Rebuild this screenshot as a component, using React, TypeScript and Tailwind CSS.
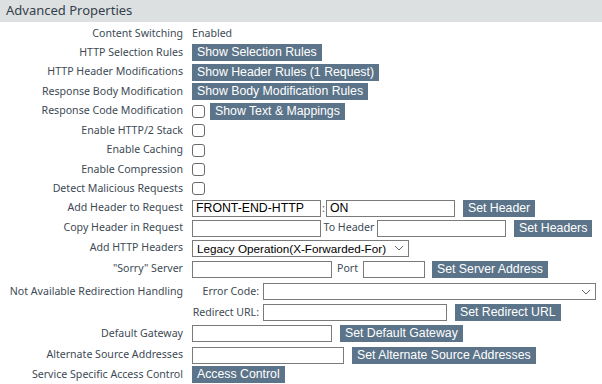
import React from 'react'

const label = "text-[10.6px] text-[#3d4a55] [font-family:'Noto_Sans',sans-serif] whitespace-nowrap"
const btn = "shrink-0 h-[17px] px-[5px] bg-[#5b7489] text-white text-[12.3px] leading-[17px] whitespace-nowrap [font-family:'Liberation_Sans',Arial,sans-serif]"
const input = "shrink-0 h-[17px] border border-[#7a7a7a] bg-white text-[12.3px] leading-[15px] px-[3px] text-black whitespace-nowrap overflow-hidden [font-family:'Liberation_Sans',Arial,sans-serif]"

function Checkbox() {
  return <div className="shrink-0 w-[13px] h-[13px] border border-[#6a6a6a] rounded-[3px] bg-white" />
}

function Chevron() {
  return (
    <svg width="10" height="6" viewBox="0 0 10 6" className="shrink-0">
      <path d="M1 1l4 4 4-4" fill="none" stroke="#666" strokeWidth="1" />
    </svg>
  )
}

function Row({ name, h, children }: { name: string; h: string; children?: React.ReactNode }) {
  return (
    <div className={`flex items-center ${h}`}>
      <div className={`w-[184px] shrink-0 text-right pr-[1px] ${label}`}>{name}</div>
      <div className="flex items-center pl-[8px]">{children}</div>
    </div>
  )
}

export default function App() {
  return (
    <div className="w-[602px] h-[384px] bg-white overflow-hidden">
      <div className="h-[22px] bg-[#dde0e1] flex items-center px-[6px]">
        <span className="text-[13px] text-[#33414c] [font-family:'Noto_Sans',sans-serif]">Advanced Properties</span>
      </div>
      <div className="mt-[2px]">
        <Row name="Content Switching" h="h-[19px]">
          <span className={label}>Enabled</span>
        </Row>
        <Row name="HTTP Selection Rules" h="h-[19px]">
          <div className={btn}>Show Selection Rules</div>
        </Row>
        <Row name="HTTP Header Modifications" h="h-[20px]">
          <div className={btn}>Show Header Rules (1 Request)</div>
        </Row>
        <Row name="Response Body Modification" h="h-[19px]">
          <div className={btn}>Show Body Modification Rules</div>
        </Row>
        <Row name="Response Code Modification" h="h-[20px]">
          <Checkbox />
          <div className={`${btn} ml-[5px]`}>Show Text &amp; Mappings</div>
        </Row>
        <Row name="Enable HTTP/2 Stack" h="h-[19px]"><Checkbox /></Row>
        <Row name="Enable Caching" h="h-[20px]"><Checkbox /></Row>
        <Row name="Enable Compression" h="h-[19px]"><Checkbox /></Row>
        <Row name="Detect Malicious Requests" h="h-[19px]"><Checkbox /></Row>
        <Row name="Add Header to Request" h="h-[20px]">
          <div className={`${input} w-[129px]`}>FRONT-END-HTTP</div>
          <span className="text-[11px] text-[#555] px-[1px]">:</span>
          <div className={`${input} w-[129px]`}>ON</div>
          <div className={`${btn} ml-[8px]`}>Set Header</div>
        </Row>
        <Row name="Copy Header in Request" h="h-[20px]">
          <div className={`${input} w-[129px]`} />
          <span className={`${label} w-[56px] text-center shrink-0`}>To Header</span>
          <div className={`${input} w-[129px]`} />
          <div className={`${btn} ml-[8px]`}>Set Headers</div>
        </Row>
        <Row name="Add HTTP Headers" h="h-[20px]">
          <div className={`${input} w-[217px] flex items-center justify-between pl-[4px] pr-[4px]`}>
            <span className="text-[11.7px]">Legacy Operation(X-Forwarded-For)</span>
            <Chevron />
          </div>
        </Row>
        <Row name={'"Sorry" Server'} h="h-[22px]">
          <div className={`${input} w-[140px]`} />
          <span className={`${label} w-[31px] text-center shrink-0`}>Port</span>
          <div className={`${input} w-[62px]`} />
          <div className={`${btn} ml-[7px]`}>Set Server Address</div>
        </Row>
        <Row name="Not Available Redirection Handling" h="h-[23px]">
          <span className={`${label} w-[71px] shrink-0 text-right pr-[4px]`}>Error Code:</span>
          <div className={`${input} w-[333px] flex items-center justify-end pr-[4px]`}>
            <Chevron />
          </div>
        </Row>
        <Row name="" h="h-[19px]">
          <span className={`${label} w-[71px] shrink-0 text-right pr-[4px]`}>Redirect URL:</span>
          <div className={`${input} w-[184px]`} />
          <div className={`${btn} ml-[8px]`}>Set Redirect URL</div>
        </Row>
        <Row name="Default Gateway" h="h-[23px]">
          <div className={`${input} w-[140px]`} />
          <div className={`${btn} ml-[8px]`}>Set Default Gateway</div>
        </Row>
        <Row name="Alternate Source Addresses" h="h-[20px]">
          <div className={`${input} w-[152px]`} />
          <div className={`${btn} ml-[8px]`}>Set Alternate Source Addresses</div>
        </Row>
        <Row name="Service Specific Access Control" h="h-[19px]">
          <div className={btn}>Access Control</div>
        </Row>
      </div>
    </div>
  )
}
